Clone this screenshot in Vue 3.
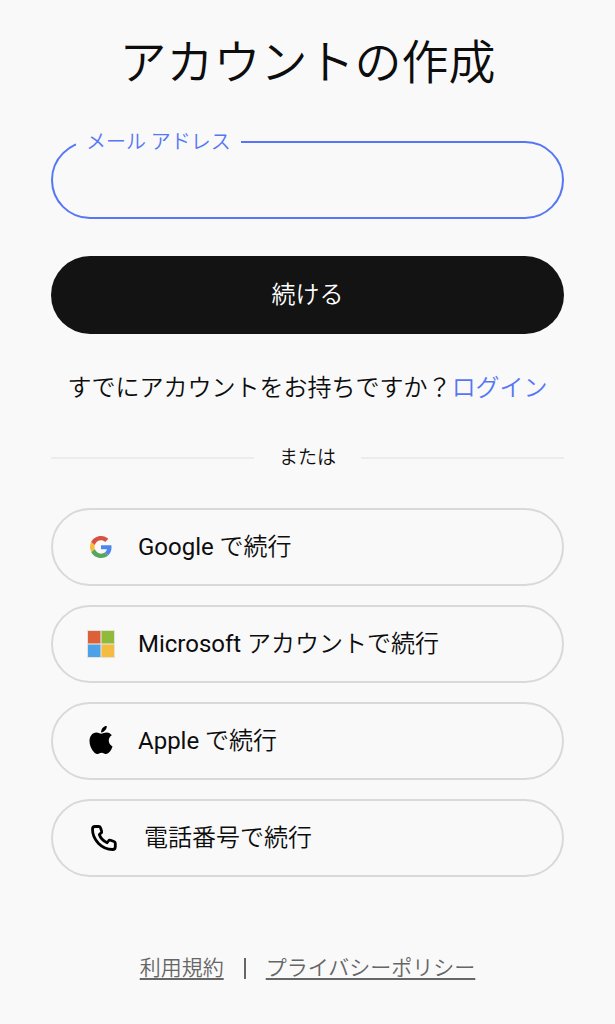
<template>
  <main class="page">
    <h1 class="title">アカウントの作成</h1>

    <form class="form" @submit.prevent="onSubmit">
      <div class="field">
        <input id="email" v-model="email" type="email" class="field-input" autocomplete="email" />
        <label for="email" class="field-label">メール アドレス</label>
      </div>
      <button type="submit" class="submit">続ける</button>
    </form>

    <p class="login">すでにアカウントをお持ちですか？<a href="#login">ログイン</a></p>

    <div class="divider"><span>または</span></div>

    <div class="providers">
      <button
        v-for="provider in providers"
        :key="provider.id"
        type="button"
        class="provider"
        @click="selected = provider.id">
        <svg v-if="provider.id === 'google'" class="icon" viewBox="0 0 30 30" aria-hidden="true">
          <g transform="translate(4 4) scale(0.4583)">
            <path
              fill="#4f86ec"
              d="M46.98 24.55c0-1.57-.15-3.09-.38-4.55H24v9.02h12.94c-.58 2.96-2.26 5.48-4.78 7.18l7.73 6c4.51-4.18 7.09-10.36 7.09-17.65z" />
            <path
              fill="#57a65b"
              d="M24 48c6.48 0 11.93-2.13 15.89-5.81l-7.73-6c-2.15 1.45-4.92 2.3-8.16 2.3-6.26 0-11.57-4.22-13.47-9.91l-7.98 6.19C6.51 42.62 14.62 48 24 48z" />
            <path
              fill="#f4bd42"
              d="M10.53 28.59c-.48-1.45-.76-2.99-.76-4.59s.27-3.14.76-4.59l-7.98-6.19C.92 16.46 0 20.12 0 24c0 3.88.92 7.54 2.56 10.78l7.97-6.19z" />
            <path
              fill="#d95040"
              d="M24 9.5c3.54 0 6.71 1.22 9.21 3.6l6.85-6.85C35.9 2.38 30.47 0 24 0 14.62 0 6.51 5.38 2.56 13.22l7.98 6.19C12.43 13.72 17.74 9.5 24 9.5z" />
          </g>
        </svg>
        <svg v-else-if="provider.id === 'microsoft'" class="icon" viewBox="0 0 30 30" aria-hidden="true">
          <path fill="#e4e2dc" d="M1 1h28v28H1z" />
          <path fill="#dd6038" d="M2 2h12.4v12.4H2z" />
          <path fill="#8fba3a" d="M15.6 2H28v12.4H15.6z" />
          <path fill="#4ca1e9" d="M2 15.6h12.4V28H2z" />
          <path fill="#f4bd42" d="M15.6 15.6H28V28H15.6z" />
        </svg>
        <svg v-else-if="provider.id === 'apple'" class="icon" viewBox="0 0 30 30" aria-hidden="true">
          <path
            transform="translate(-3.2 -5) scale(1.52 1.57)"
            d="M17.05 20.28c-.98.95-2.05.8-3.08.35-1.09-.46-2.09-.48-3.24 0-1.44.62-2.2.44-3.06-.35C2.79 15.25 3.51 7.59 9.05 7.31c1.35.07 2.29.74 3.08.8 1.18-.24 2.31-.93 3.57-.84 1.51.12 2.65.72 3.4 1.8-3.12 1.87-2.38 5.98.48 7.13-.57 1.5-1.31 2.99-2.54 4.09zM12.03 7.25c-.15-2.23 1.66-4.07 3.74-4.25.29 2.58-2.34 4.5-3.74 4.25z" />
        </svg>
        <svg v-else class="icon icon-phone" viewBox="0 0 30 30" aria-hidden="true">
          <path
            fill="none"
            stroke="#000"
            stroke-width="2.8"
            stroke-linejoin="round"
            d="M6 3.5H9.6C10.5 3.5 11.2 4 11.5 4.8L12.6 8C12.9 8.8 12.6 9.7 11.9 10.2L10.3 11.5C11.5 15 14.5 18.2 18.1 19.7L19.4 18C19.9 17.3 20.8 17 21.6 17.3L25 18.5C25.8 18.8 26.3 19.5 26.3 20.3V23.7C26.3 25.4 25.2 26.5 23.5 26.5C13 26.5 3.5 17 3.5 6.3C3.5 4.6 4.4 3.5 6 3.5Z" />
        </svg>
        <span><span class="brand">{{ provider.brand }}</span>{{ provider.label }}</span>
      </button>
    </div>

    <footer class="footer">
      <a href="#terms">利用規約</a>
      <span class="separator"></span>
      <a href="#privacy">プライバシーポリシー</a>
    </footer>
  </main>
</template>

<script setup>
import { ref } from 'vue';

const email = ref('');
const selected = ref(null);

const providers = [
  { id: 'google', brand: 'Google', label: ' で続行' },
  { id: 'microsoft', brand: 'Microsoft', label: ' アカウントで続行' },
  { id: 'apple', brand: 'Apple', label: ' で続行' },
  { id: 'phone', brand: '', label: '電話番号で続行' },
];

function onSubmit() {
  selected.value = 'email';
}
</script>

<style>
body {
  background: #f9f9f9;
}
</style>

<style scoped>
.page {
  box-sizing: border-box;
  padding: 25px 51px 40px;
  font-family: Roboto, 'Noto Sans CJK JP', sans-serif;
  font-size: 24px;
  font-weight: 350;
  line-height: 36px;
  color: #0d0d0d;
}
.title {
  margin: 0 0 40px;
  font-size: 47px;
  font-weight: 350;
  line-height: 76px;
  text-align: center;
  white-space: nowrap;
}
.form {
  display: flex;
  flex-direction: column;
  gap: 37px;
}
.field {
  position: relative;
}
.field-input {
  box-sizing: border-box;
  display: block;
  width: 100%;
  height: 78px;
  padding: 0 34px;
  border: 2px solid #5677f5;
  border-radius: 39px;
  outline: none;
  background: transparent;
  font: inherit;
  color: inherit;
}
.field-label {
  position: absolute;
  top: -14px;
  left: 25px;
  padding: 0 10px;
  background: #f9f9f9;
  font-size: 20px;
  line-height: 30px;
  color: #5677f5;
}
.submit {
  height: 78px;
  border: none;
  border-radius: 39px;
  background: #131313;
  font: inherit;
  color: #fff;
  cursor: pointer;
}
.login {
  margin: 36px 0 0;
  text-align: center;
}
.login a {
  color: #5677f5;
  text-decoration: none;
}
.divider {
  display: flex;
  align-items: center;
  gap: 25px;
  margin-top: 37px;
  font-size: 19px;
  line-height: 30px;
}
.divider::before,
.divider::after {
  content: '';
  flex: 1;
  height: 2px;
  background: #ececec;
}
.providers {
  display: flex;
  flex-direction: column;
  gap: 19px;
  margin-top: 35px;
}
.provider {
  box-sizing: border-box;
  display: flex;
  align-items: center;
  gap: 22px;
  height: 78px;
  padding: 0 33px;
  border: 2px solid #d9d9d9;
  border-radius: 39px;
  background: transparent;
  font: inherit;
  color: inherit;
  text-align: left;
  cursor: pointer;
}
.brand {
  font-weight: 450;
}
.icon {
  flex: none;
  width: 30px;
  height: 30px;
}
.icon-phone {
  margin: 0 3px;
}
.footer {
  display: flex;
  justify-content: center;
  align-items: center;
  gap: 20px;
  margin-top: 76px;
  font-size: 21px;
  line-height: 30px;
  color: #666;
}
.footer a {
  color: inherit;
  text-underline-offset: 3px;
}
.separator {
  width: 2px;
  height: 21px;
  background: #666;
}
</style>
